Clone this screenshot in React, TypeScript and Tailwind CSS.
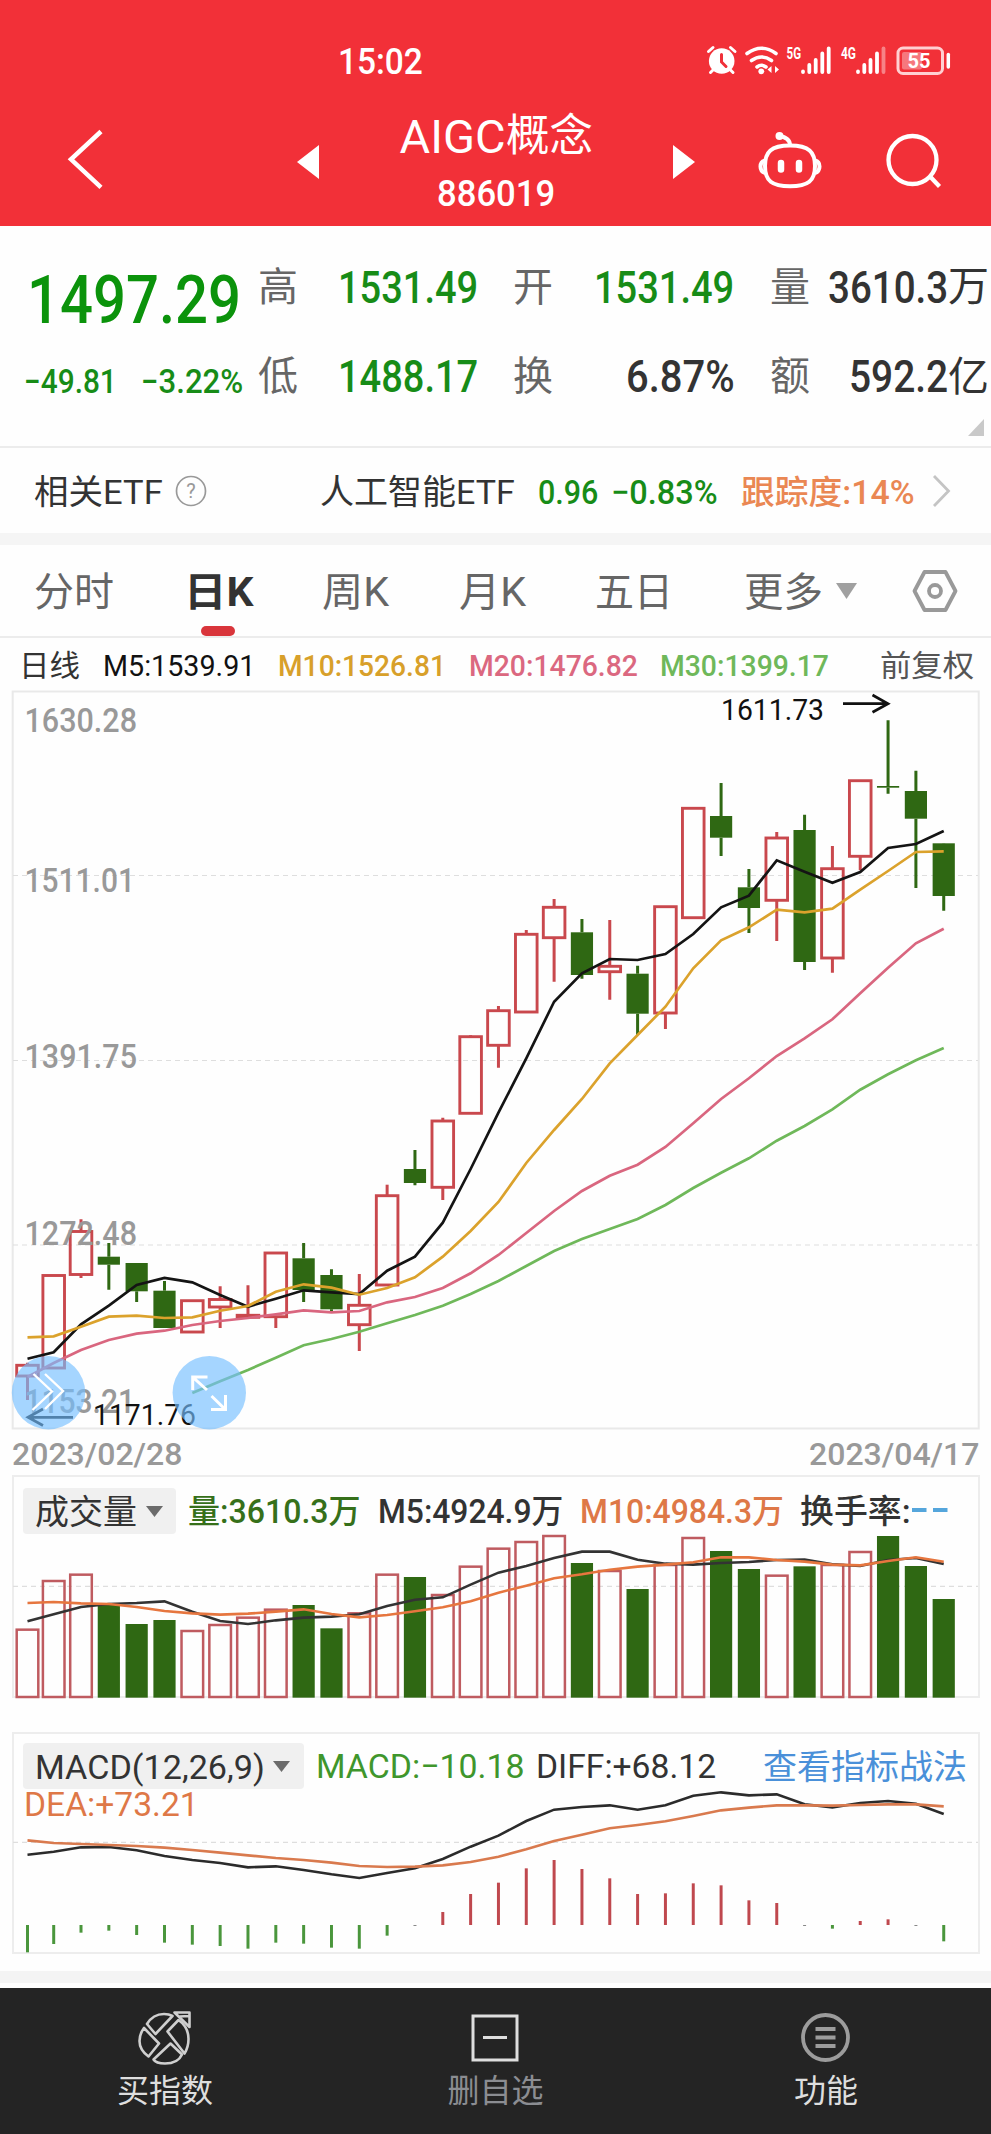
import { useLayoutEffect, useRef, useState, type ReactNode } from 'react';
import clsx from 'clsx';

type FitProps = { w: number; className?: string; children: ReactNode };

function Fit({ w, className, children }: FitProps) {
  const ref = useRef<HTMLSpanElement>(null);
  const [scale, setScale] = useState(1);

  useLayoutEffect(() => {
    if (ref.current && ref.current.offsetWidth > 0) {
      setScale(w / ref.current.offsetWidth);
    }
  }, [w]);

  return (
    <span className={clsx('block shrink-0 whitespace-nowrap leading-none', className)} style={{ width: w }}>
      <span ref={ref} className="inline-block origin-left" style={{ transform: `scaleX(${scale})` }}>
        {children}
      </span>
    </span>
  );
}

const RED = '#c9484d';
const GREEN = '#2f6813';

const cx = (i: number) => (i === 0 ? 27.5 : i === 1 ? 53.7 : 81 + 27.83 * (i - 2));

const line = (ys: number[], start = 0) => ys.map((y, i) => `${cx(i + start)},${y}`).join(' ');

// 面板内的 y 坐标
const at = (base: number, ys: number[]) => ys.map((y) => base + y / 3);

// [涨跌, 实体顶, 实体底, 最高, 最低]
type Candle = [1 | 0, number, number, number, number];

const candles: Candle[] = [
  [1, 1365.3, 1376, 1362.7, 1400],
  [1, 1275.5, 1368, 1275, 1368],
  [1, 1231.5, 1274.5, 1219.3, 1278],
  [0, 1256.7, 1264.7, 1243, 1289.7],
  [0, 1263, 1291.3, 1263, 1302],
  [0, 1290.7, 1328, 1281, 1328],
  [1, 1300.7, 1332, 1300, 1332],
  [1, 1299.5, 1307, 1286.3, 1328],
  [1, 1315.3, 1317.3, 1285.3, 1317],
  [1, 1253, 1316.7, 1253, 1328],
  [0, 1258.3, 1290, 1243, 1302],
  [0, 1275, 1309.3, 1269.3, 1311.3],
  [1, 1305.3, 1324.7, 1274, 1351],
  [1, 1195.7, 1285, 1184.7, 1285],
  [0, 1169, 1183, 1150, 1185.3],
  [1, 1121, 1187.3, 1117.7, 1200],
  [1, 1036.7, 1113.3, 1035.3, 1113],
  [1, 1010.7, 1045.3, 1006, 1067.7],
  [1, 934.3, 1012, 930, 1012],
  [1, 907.3, 937.7, 899, 981.7],
  [0, 932.3, 975, 919, 978.7],
  [1, 966.3, 971.7, 920, 999.7],
  [0, 973.7, 1013.7, 965.7, 1035],
  [1, 906.7, 1013, 906, 1029],
  [1, 808.3, 917.7, 808, 917],
  [0, 816, 837.7, 783, 856],
  [0, 887.3, 908, 869, 933],
  [1, 838, 900.3, 832, 941],
  [0, 830, 962, 814.7, 970],
  [1, 868.7, 958, 846, 972.7],
  [1, 780.7, 856.3, 780, 870.3],
  [0, 786, 787.7, 720.3, 793.7],
  [0, 791, 818.7, 770.7, 888],
  [0, 843.3, 896, 843, 910.7],
];

const ma5 = [
  1358.7, 1352.3, 1324.3, 1305.7, 1285, 1278, 1282.3, 1295, 1306.7, 1298.7, 1290.3, 1292.3, 1294, 1270.7, 1256.7,
  1222.7, 1169, 1112.7, 1058.3, 1001.7, 973.3, 959, 960, 954, 934, 907.3, 895.7, 860.3, 871.7, 882.7, 872, 848, 844, 831,
];
const ma10 = [
  1337.3, 1336.3, 1326.7, 1316.7, 1315.7, 1318, 1317.3, 1310.7, 1306, 1291.7, 1284.3, 1287.7, 1294.7, 1288, 1277.3,
  1256.7, 1231, 1202, 1163, 1130, 1099, 1063.3, 1035, 1006.7, 968.3, 940.3, 927.3, 909.7, 912.3, 908.7, 889.7, 871,
  852, 851.3,
];
const ma20 = [
  1377, 1363, 1350, 1340, 1333.7, 1330.7, 1325, 1321, 1318, 1314.3, 1310.3, 1312.3, 1311, 1302.3, 1297, 1288, 1273.3,
  1255, 1233, 1211, 1191, 1175.7, 1164.7, 1147, 1123.3, 1099, 1078.3, 1056, 1038.3, 1019.3, 993.3, 967.7, 943.3, 928.7,
];
const ma30 = [
  1393, 1381.3, 1370, 1357.7, 1345.3, 1339, 1331.7, 1323.3, 1315, 1305.7, 1294, 1281, 1266, 1251, 1239, 1229, 1219,
  1205, 1188, 1172.7, 1158.3, 1140.7, 1126, 1109.3, 1089.7, 1074.3, 1060.3, 1048,
];

const volume = [
  479, 333, 314, 405, 462, 450, 483, 465, 443, 419, 405, 475, 430, 314, 321, 375, 290, 236, 216, 198, 279, 303, 357,
  285, 204, 243, 297, 317, 289, 285, 246, 198, 288, 387,
];
const volMa5 = [
  454, 433, 411, 402, 399, 394, 425, 453, 462, 451, 443, 440, 433, 408, 389, 382, 344, 308, 288, 264, 245, 245, 269,
  281, 284, 279, 276, 270, 269, 283, 288, 270, 264, 282,
];
const volMa10 = [
  399, 396, 400, 402, 411, 423, 430, 434, 431, 425, 418, 432, 442, 435, 424, 412, 394, 368, 347, 325, 313, 299, 290,
  284, 277, 262, 262, 270, 275, 284, 286, 273, 262, 275,
];

const macd = [
  697, 672, 638, 632, 645, 668, 674, 678, 686, 668, 671, 683, 686, 647, 618, 576, 522, 488, 445, 420, 447, 475, 522,
  520, 490, 496, 541, 549, 618, 626, 603, 598, 618, 664,
];
const diff = [
  404, 395, 382, 381, 391, 408, 420, 429, 442, 439, 450, 463, 474, 459, 445, 417, 380, 347, 303, 269, 261, 256, 269,
  256, 227, 217, 226, 223, 253, 262, 249, 243, 251, 282,
];
const dea = [
  361, 369, 372, 375, 378, 383, 390, 398, 406, 414, 420, 428, 438, 441, 440, 436, 426, 410, 388, 363, 344, 325, 315,
  304, 288, 271, 263, 256, 256, 257, 255, 253, 253, 259,
];

const axis = [
  { text: '1630.28', y: 731.7, w: 109 },
  { text: '1511.01', y: 892, w: 107 },
  { text: '1391.75', y: 1068.3, w: 109 },
  { text: '1272.48', y: 1244.7, w: 109 },
  { text: '1153.21', y: 1413.3, w: 107 },
];

function StatusIcons() {
  return (
    <svg className="ml-[281px] h-[34px] w-[250px]" viewBox="704 44 250 34" fill="none" stroke="#fff" strokeLinecap="round">
      <circle cx="721.7" cy="61" r="12.8" fill="#fff" stroke="none" />
      <path d="M708.5 51.5l4.5-4M735 51.5l-4.5-4M710.5 72.5l4-4M733 72.5l-4-4" strokeWidth="3" />
      <path d="M721.5 54.5v7.5l4.5 4.5" stroke="#f03039" strokeWidth="3" />
      <path d="M747 53.500q14.500-10.500 29 0M751.500 60.500q10-7 20 0M757 67q4.500-3.500 9 0" strokeWidth="3.600" />
      <circle cx="761.300" cy="71.300" r="2.900" fill="#fff" stroke="none" />
      <path d="M767.500 69.500l4-3.500v7zM779 69.500l-4-3.500v7z" fill="#fff" stroke="none" />
      <text x="786.500" y="58.500" fontFamily="Roboto" fontWeight="700" fontSize="16.500" fill="#fff" stroke="none" textLength="14.500" lengthAdjust="spacingAndGlyphs">5G</text>
      <path d="M803 71.500v.5M809.300 65v7M815.700 60v12M822.300 53.500v18.500M828.700 48.500v23.500" strokeWidth="3.800" />
      <text x="841" y="58.500" fontFamily="Roboto" fontWeight="700" fontSize="16.500" fill="#fff" stroke="none" textLength="15" lengthAdjust="spacingAndGlyphs">4G</text>
      <path d="M858 71.500v.5M864.300 65v7M870.500 60v12M877 53.500v18.500" strokeWidth="3.800" />
      <path d="M883.500 48.500v23.500" strokeWidth="3.800" opacity=".4" />
      <rect x="898" y="48" width="44.500" height="25.500" rx="5" strokeWidth="3" stroke="#ffd0d2" />
      <rect x="902" y="52" width="20" height="17.500" rx="2" fill="#fff" opacity=".35" stroke="none" />
      <path d="M948.300 54.500v12.500" strokeWidth="3.500" />
      <text x="907.500" y="68.300" fontFamily="Roboto" fontWeight="700" fontSize="21" fill="#fff" stroke="none" textLength="23" lengthAdjust="spacingAndGlyphs">55</text>
    </svg>
  );
}

function Header() {
  return (
    <header className="h-[226px] bg-[#f23038] text-white">
      <div className="flex h-[92px] items-end pb-[14px] pl-[338px]">
        <Fit w={85} className="mb-[-2px] text-[37px] font-medium">15:02</Fit>
        <StatusIcons />
      </div>
      <div className="flex h-[134px] items-center">
        <svg className="ml-[66px] h-[60px] w-[38px]" viewBox="66 129 38 60" fill="none" stroke="#fff" strokeWidth="4.500">
          <path d="M101 131.500L71 159.300l30 28" />
        </svg>
        <svg className="ml-[193px] mt-[6px] h-[34px] w-[22px]" viewBox="0 0 22 34" fill="#fff">
          <path d="M22 0v34L0 17z" />
        </svg>
        <div className="flex w-[354px] flex-col items-center pt-[3px]">
          <div className="flex h-[54px] items-center">
            <Fit w={106} className="mt-[1px] text-[47px]">AIGC</Fit>
            <Fit w={87} className="text-[44px]">概念</Fit>
          </div>
          <Fit w={118} className="mt-[12px] text-[37px] font-medium">886019</Fit>
        </div>
        <svg className="mt-[6px] h-[34px] w-[22px]" viewBox="0 0 22 34" fill="#fff">
          <path d="M0 0v34L22 17z" />
        </svg>
        <svg className="ml-[62px] mt-[2px] h-[60px] w-[66px]" viewBox="757 130 66 60" fill="none" stroke="#fff" strokeWidth="4">
          <path d="M790 145.500C809 145.500 815 152 815 166C815 181 808 186.300 790 186.300S765 181 765 166C765 152 771 145.500 790 145.500z" />
          <path d="M765 160.500q-4.500 1-4.500 6t4.500 6.500M815 160.500q4.500 1 4.500 6t-4.500 6.500" />
          <path d="M790 145.500q0-8-11-9.500" />
          <circle cx="779.500" cy="136" r="4" fill="#fff" stroke="none" />
          <path d="M781 163v6.500M799 163v6.500" strokeWidth="6.500" strokeLinecap="round" />
        </svg>
        <svg className="ml-[61px] mt-[4px] h-[58px] w-[60px]" viewBox="884 132 60 58" fill="none" stroke="#fff" strokeWidth="4.300">
          <circle cx="912.500" cy="160" r="24" />
          <path d="M930.500 177l9 9.500" />
        </svg>
      </div>
    </header>
  );
}

function Quote() {
  return (
    <section className="relative h-[222px] overflow-hidden border-b-2 border-[#ececec] text-[#333]">
      <div className="flex h-[120px] items-center pl-[27px]">
        <Fit w={214} className="mt-[29px] text-[67px] font-medium text-[#0b930b]">1497.29</Fit>
        <Fit w={40} className="mt-[3px] ml-[17px] text-[40px] text-[#666]">高</Fit>
        <Fit w={140} className="ml-[40px] mt-[4px] text-[44px] font-medium text-[#178c17]">1531.49</Fit>
        <Fit w={40} className="ml-[35px] mt-[3px] text-[40px] text-[#666]">开</Fit>
        <Fit w={140} className="ml-[41px] mt-[4px] text-[44px] font-medium text-[#178c17]">1531.49</Fit>
        <Fit w={40} className="ml-[36px] mt-[3px] text-[40px] text-[#666]">量</Fit>
        <Fit w={120} className="ml-[18px] mt-[4px] text-[44px] font-medium">3610.3</Fit>
        <Fit w={41} className="mt-[3px] text-[41px]">万</Fit>
      </div>
      <div className="flex h-[58px] items-center pl-[24px]">
        <Fit w={93} className="mt-[12px] text-[33px] font-medium text-[#178c17]">−49.81</Fit>
        <Fit w={102} className="ml-[24px] mt-[12px] text-[33px] font-medium text-[#178c17]">−3.22%</Fit>
        <Fit w={40} className="ml-[15px] mt-[4px] text-[40px] text-[#666]">低</Fit>
        <Fit w={140} className="ml-[40px] mt-[4px] text-[44px] font-medium text-[#178c17]">1488.17</Fit>
        <Fit w={40} className="ml-[35px] mt-[4px] text-[40px] text-[#666]">换</Fit>
        <Fit w={109} className="ml-[73px] mt-[4px] text-[44px] font-medium">6.87%</Fit>
        <Fit w={40} className="ml-[35px] mt-[4px] text-[40px] text-[#666]">额</Fit>
        <Fit w={99} className="ml-[39px] mt-[4px] text-[44px] font-medium">592.2</Fit>
        <Fit w={41} className="mt-[4px] text-[41px]">亿</Fit>
      </div>
      <svg className="absolute bottom-[10px] right-[7px] h-[17px] w-[16px]" viewBox="0 0 16 17" fill="#c9c9c9">
        <path d="M16 0v17H0z" />
      </svg>
    </section>
  );
}

function EtfRow() {
  return (
    <section className="flex h-[85px] items-center pl-[34px] text-[#333]">
      <Fit w={129} className="mt-[2px] text-[34px]">相关ETF</Fit>
      <svg className="ml-[12px] h-[32px] w-[32px]" viewBox="0 0 32 32" fill="none" stroke="#999" strokeWidth="1.700">
        <circle cx="16" cy="16" r="14.500" />
        <text x="16" y="23" textAnchor="middle" fontFamily="Roboto" fontSize="20" fill="#999" stroke="none">?</text>
      </svg>
      <Fit w={195} className="ml-[113px] mt-[2px] text-[34px]">人工智能ETF</Fit>
      <Fit w={60} className="ml-[23px] mt-[3px] text-[34px] font-medium text-[#178c17]">0.96</Fit>
      <Fit w={107} className="ml-[13px] mt-[3px] text-[34px] font-medium text-[#178c17]">−0.83%</Fit>
      <Fit w={174} className="ml-[23px] mt-[3px] text-[33px] font-medium text-[#ea8753]">跟踪度:14%</Fit>
      <svg className="ml-[17px] h-[34px] w-[20px]" viewBox="0 0 20 34" fill="none" stroke="#c4c4c4" strokeWidth="2.800">
        <path d="M2 2l14.500 15L2 32" />
      </svg>
    </section>
  );
}

function Tabs() {
  return (
    <nav className="relative flex h-[93px] items-center border-b-2 border-[#ececec] pl-[34px] text-[40px] text-[#666]">
      <Fit w={80} className="mt-[5px]">分时</Fit>
      <Fit w={69} className="ml-[70px] mt-[5px] font-bold text-[#333]">日K</Fit>
      <Fit w={67} className="ml-[69px] mt-[5px]">周K</Fit>
      <Fit w={67} className="ml-[70px] mt-[5px]">月K</Fit>
      <Fit w={78} className="ml-[69px] mt-[5px]">五日</Fit>
      <Fit w={79} className="ml-[71px] mt-[5px]">更多</Fit>
      <svg className="ml-[13px] h-[16px] w-[21px]" viewBox="0 0 21 16" fill="#a0a0a0">
        <path d="M0 0h21L10.500 16z" />
      </svg>
      <svg className="ml-[55px] h-[44px] w-[46px]" viewBox="0 0 46 44" fill="none" stroke="#999" strokeWidth="3.800" strokeLinejoin="round">
        <path d="M12.500 3h21L43.500 22l-10 19h-21L2.500 22z" />
        <circle cx="23" cy="22" r="6" />
      </svg>
      <span className="absolute bottom-0 left-[201px] h-[10px] w-[34px] rounded-[5px] bg-[#d9353b]" />
    </nav>
  );
}

function PriceChart() {
  return (
    <svg className="block h-[741px] w-full" viewBox="0 690 991 741" fill="none" fontFamily="Roboto, 'Noto Sans CJK SC', sans-serif">
      <rect x="12.700" y="691.500" width="966" height="737" stroke="#e9e9e9" strokeWidth="2" />
      <path d="M13 875.500H978M13 1060.500H978M13 1245H978" stroke="#dedede" strokeWidth="1.200" strokeDasharray="5 4" />

      {candles.map(([up, top, bottom, high, low], i) => (
        <g key={i} stroke={up ? RED : GREEN}>
          <path d={`M${cx(i)} ${high}V${top}M${cx(i)} ${bottom}V${low}`} strokeWidth="3" />
          {up ? (
            <rect x={cx(i) - 10.8} y={top} width="21.600" height={bottom - top} strokeWidth="2.900" />
          ) : (
            <rect x={cx(i) - 11.1} y={top} width="22.200" height={bottom - top} fill={GREEN} stroke="none" />
          )}
        </g>
      ))}

      <polyline points={line(ma30, 6)} stroke="#6fb85a" strokeWidth="2.700" />
      <polyline points={line(ma20)} stroke="#d9667f" strokeWidth="2.700" />
      <polyline points={line(ma5)} stroke="#141414" strokeWidth="2.700" />
      <polyline points={line(ma10)} stroke="#dba22c" strokeWidth="2.700" />

      {axis.map((a) => (
        <text key={a.text} x="24.500" y={a.y} fontSize="33.500" fontWeight="500" fill="#999" textLength={a.w + 3.5} lengthAdjust="spacingAndGlyphs">
          {a.text}
        </text>
      ))}

      <text x="721" y="720.300" fontSize="29.500" fill="#111" textLength="103" lengthAdjust="spacingAndGlyphs">1611.73</text>
      <path d="M843 703.700H888M872.500 695l15.500 8.700l-15.500 8.500" stroke="#111" strokeWidth="2.700" />
      <text x="93" y="1425" fontSize="29.500" fill="#111" textLength="103" lengthAdjust="spacingAndGlyphs">1171.76</text>
      <path d="M73 1417.300H28M43 1409l-15 8.300l15 8.200" stroke="#111" strokeWidth="2.700" />

      <circle cx="48.500" cy="1392.700" r="36.700" fill="#74beff" opacity=".65" />
      <path d="M33.500 1374l18.500 17.500l-19.500 18.500M45 1374l18 17l-18 18" stroke="#fff" strokeWidth="2.400" />
      <circle cx="209.300" cy="1392.700" r="36.700" fill="#74beff" opacity=".65" />
      <path d="M207.500 1377H192.700V1390M193 1377.300L207 1390M211 1409.500H225.500V1395M225.200 1409.300L211.500 1396" stroke="#fff" strokeWidth="3" />
    </svg>
  );
}

function Caret() {
  return (
    <svg className="h-[11px] w-[17px]" viewBox="0 0 17 11" fill="#6b6b6b">
      <path d="M0 0h17L8.500 11z" />
    </svg>
  );
}

function VolumePanel() {
  return (
    <section className="relative ml-[12px] h-[223px] w-[968px] border-2 border-[#ededed]">
      <svg className="absolute -left-[2px] -top-[2px] h-[225px] w-[968px]" viewBox="12 1475 968 225" fill="none">
        <path d="M13 1586.300H978" stroke="#dedede" strokeWidth="1.200" strokeDasharray="5 4" />
        {volume.map((v, i) =>
          candles[i][0] ? (
            <rect key={i} x={cx(i) - 10.8} y={1470 + v / 3} width="21.600" height={(681 - v) / 3} stroke="#bf5b60" strokeWidth="2.500" />
          ) : (
            <rect key={i} x={cx(i) - 11.1} y={1470 + v / 3} width="22.200" height={(683 - v) / 3} fill={GREEN} />
          ),
        )}
        <polyline points={line(at(1470, volMa5))} stroke="#333" strokeWidth="2.600" />
        <polyline points={line(at(1470, volMa10))} stroke="#e6763f" strokeWidth="2.600" />
      </svg>
      <div className="relative flex h-[46px] items-center pl-[9px] pt-[20px] text-[33px] font-medium text-[#333]">
        <div className="mt-[2px] flex h-[46px] w-[153px] shrink-0 items-center gap-[9px] rounded-[4px] bg-[#f0f0f0] pl-[12px] font-normal">
          <Fit w={102} className="mt-[2px] text-[34px]">成交量</Fit>
          <Caret />
        </div>
        <Fit w={173} className="ml-[12px] mt-[2px] text-[#36701a]">量:3610.3万</Fit>
        <Fit w={185} className="ml-[17px] mt-[2px]">M5:4924.9万</Fit>
        <Fit w={204} className="ml-[17px] mt-[2px] text-[#de7847]">M10:4984.3万</Fit>
        <Fit w={111} className="ml-[16px] mt-[2px]">换手率:</Fit>
        <svg className="ml-[1px] h-[4px] w-[37px]" viewBox="0 0 37 4" fill="#55a6dc">
          <path d="M0 0h14.500v4H0zM21 0H35.500v4H21z" />
        </svg>
      </div>
    </section>
  );
}

function MacdPanel() {
  return (
    <section className="relative ml-[12px] mt-[34px] h-[222px] w-[968px] border-2 border-[#ededed]">
      <svg className="absolute -left-[2px] -top-[2px] h-[222px] w-[968px]" viewBox="12 1732 968 222" fill="none">
        <path d="M13 1842.300H978" stroke="#dedede" strokeWidth="1.200" strokeDasharray="5 4" />
        {macd.map((v, i) => (
          <path
            key={i}
            d={`M${cx(i)} 1925V${1720 + v / 3}`}
            stroke={v < 615 ? '#bf484e' : v === 618 ? '#888' : '#4a963c'}
            strokeWidth="3"
          />
        ))}
        <polyline points={line(at(1720, diff))} stroke="#2b2b2b" strokeWidth="2.600" />
        <polyline points={line(at(1720, dea))} stroke="#d97a4e" strokeWidth="2.600" />
      </svg>
      <div className="relative flex items-center pl-[9px] pt-[9px] text-[34px] text-[#333]">
        <div className="flex h-[46px] w-[281px] shrink-0 items-center gap-[8px] rounded-[4px] bg-[#f0f0f0] pl-[12px]">
          <Fit w={230} className="mt-[1px]">MACD(12,26,9)</Fit>
          <Caret />
        </div>
        <Fit w={209} className="ml-[12px] text-[#3f962c]">MACD:−10.18</Fit>
        <Fit w={180} className="ml-[11px]">DIFF:+68.12</Fit>
        <Fit w={204} className="ml-[47px] mt-[1px] text-[#4a90d9]">查看指标战法</Fit>
      </div>
      <Fit w={175} className="relative -mt-[2px] ml-[10px] text-[34px] text-[#de7847]">DEA:+73.21</Fit>
    </section>
  );
}

function BottomBar() {
  return (
    <footer className="flex h-[146px] justify-between bg-[#242424] px-[117px] pt-[22px] text-[32px] text-[#dedede]">
      <div className="flex w-[96px] flex-col items-center gap-[9px]">
        <svg className="h-[56px] w-[56px]" viewBox="137 2010 56 56" fill="none" stroke="#cfcfcf" strokeWidth="2.600" strokeLinejoin="round">
          <path d="M147 2024Q153 2014 164 2014Q169 2014 172.500 2016L155.500 2034z" />
          <path d="M178.500 2020L167.500 2031.500L184.500 2053.500Q188.500 2047 188.500 2039Q188.500 2027 178.500 2020z" />
          <path d="M144 2028Q139.500 2034 139.500 2041Q139.500 2050 148.500 2056.500L159 2043.500z" />
          <path d="M170.500 2043.500L182 2054.500Q178 2063.500 165 2063.500Q156 2063.500 153.500 2059.500z" />
          <path d="M174.500 2012.500H189.500V2027zM179.500 2016.500L189 2016" />
        </svg>
        <Fit w={96}>买指数</Fit>
      </div>
      <div className="flex w-[96px] flex-col items-center gap-[9px] text-[#8b8d92]">
        <svg className="h-[56px] w-[56px]" viewBox="0 0 56 56" fill="none" stroke="#dedede" strokeWidth="3">
          <rect x="5" y="6" width="44" height="44" />
          <path d="M15 27.500h24" />
        </svg>
        <Fit w={96}>删自选</Fit>
      </div>
      <div className="flex w-[96px] flex-col items-center gap-[9px]">
        <svg className="h-[56px] w-[56px]" viewBox="0 0 56 56" fill="none" stroke="#9c9c9c" strokeWidth="4">
          <circle cx="27.500" cy="27.500" r="22.500" strokeWidth="3.800" />
          <path d="M17.500 19h20M17.500 27.500h20M17.500 36h20" />
        </svg>
        <Fit w={64}>功能</Fit>
      </div>
    </footer>
  );
}

export default function App() {
  return (
    <div className="h-[2134px] w-[991px] overflow-hidden bg-[#fefefe] font-[Roboto,'Noto_Sans_CJK_SC',sans-serif]">
      <Header />
      <Quote />
      <EtfRow />
      <div className="h-[12px] bg-[#f5f5f5]" />
      <Tabs />
      <div className="flex h-[52px] items-center pl-[19px] pt-[4px] text-[30px] text-[#333]">
        <Fit w={61}>日线</Fit>
        <Fit w={152} className="ml-[23px] text-[#111]">M5:1539.91</Fit>
        <Fit w={168} className="ml-[23px] font-medium text-[#d8a02a]">M10:1526.81</Fit>
        <Fit w={169} className="ml-[23px] font-medium text-[#db6880]">M20:1476.82</Fit>
        <Fit w={169} className="ml-[22px] font-medium text-[#6fb85a]">M30:1399.17</Fit>
        <Fit w={94} className="ml-[51px] text-[#555]">前复权</Fit>
      </div>
      <PriceChart />
      <div className="flex h-[44px] items-center justify-between pl-[12px] pr-[12px] pt-[2px] text-[32px] text-[#999]">
        <Fit w={170} className="font-medium">2023/02/28</Fit>
        <Fit w={170} className="font-medium">2023/04/17</Fit>
      </div>
      <VolumePanel />
      <MacdPanel />
      <div className="mt-[17px] h-[12px] bg-[#f4f4f4]" />
      <div className="h-[5px]" />
      <BottomBar />
    </div>
  );
}
